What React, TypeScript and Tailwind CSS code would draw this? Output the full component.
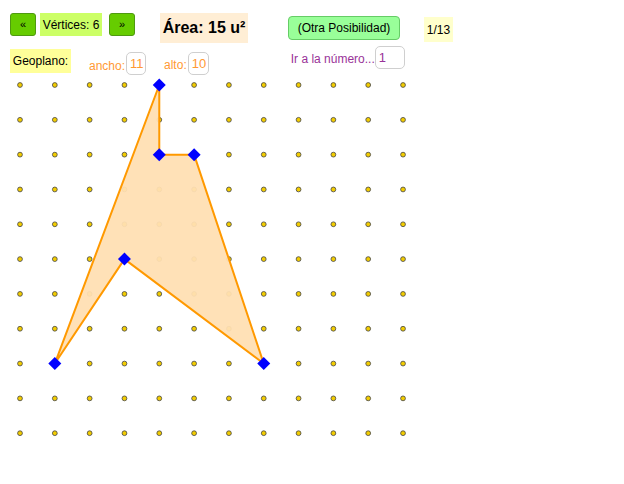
import React from "react";

const X0 = 20;
const Y0 = 85;
const STEP = 34.82;
const TOP = 78;

const px = (c: number) => X0 + c * STEP;
const py = (r: number) => Y0 + r * STEP - TOP;

const verts: [number, number][] = [
  [4, 0],
  [4, 2],
  [5, 2],
  [7, 8],
  [3, 5],
  [1, 8],
];

const Geoboard: React.FC = () => {
  const dots = [];
  for (let r = 0; r < 11; r++) {
    for (let c = 0; c < 12; c++) {
      dots.push(
        <circle
          key={`${r}-${c}`}
          cx={px(c)}
          cy={py(r)}
          r={2.4}
          fill="#f2cc00"
          stroke="#444"
          strokeWidth={0.8}
        />
      );
    }
  }
  const pts = verts.map(([c, r]) => `${px(c)},${py(r)}`).join(" ");
  return (
    <svg width={624} height={406} className="block">
      {dots}
      <polygon
        points={pts}
        fill="#ffdfb3"
        fillOpacity={0.95}
        stroke="#ff9900"
        strokeWidth={2}
        strokeLinejoin="round"
      />
      {verts.map(([c, r], i) => {
        const x = px(c);
        const y = py(r);
        const d = 6.5;
        return (
          <polygon
            key={i}
            points={`${x},${y - d} ${x + d},${y} ${x},${y + d} ${x - d},${y}`}
            fill="#0000ff"
          />
        );
      })}
    </svg>
  );
};

const GreenBtn: React.FC<{ label: string; className?: string }> = ({ label, className }) => (
  <div
    className={`w-[26px] h-[23px] rounded-[3px] bg-[#66cc00] border border-[#4f9a10] flex items-center justify-center text-[11px] text-black ${className ?? ""}`}
  >
    {label}
  </div>
);

const SmallInput: React.FC<{ value: string; color: string; className?: string }> = ({ value, color, className }) => (
  <div
    className={`h-[23px] rounded-[5px] border border-[#cfcfcf] bg-white flex items-center px-[3px] text-[13px] ${color} ${className ?? ""}`}
  >
    {value}
  </div>
);

export default function App() {
  return (
    <div className="w-[624px] h-[484px] bg-white overflow-hidden font-['Liberation_Sans',Arial,sans-serif] text-black">
      <div className="h-[78px] relative">
        <div className="flex items-start pt-[12px]">
          <GreenBtn label="«" className="ml-[10px] mt-[1px]" />
          <div className="ml-[4px] mt-[1px] h-[23px] w-[62px] bg-[#ccff66] flex items-center justify-center text-[12px]">
            Vértices: 6
          </div>
          <GreenBtn label="»" className="ml-[7px] mt-[1px]" />
          <div className="ml-[25px] mt-[1px] h-[30px] w-[88px] bg-[#ffeed5] flex items-center justify-center text-[16px] font-bold">
            Área: 15 u²
          </div>
          <div className="ml-[40px] mt-[4px] h-[24px] w-[112px] rounded-[4px] bg-[#99ff99] border border-[#66cc66] flex items-center justify-center text-[12px]">
            (Otra Posibilidad)
          </div>
          <div className="ml-[24px] mt-[5px] h-[25px] w-[29px] bg-[#ffffcc] flex items-center justify-center text-[12px]">
            1/13
          </div>
        </div>
        <div className="flex items-start mt-[1px]">
          <div className="ml-[10px] mt-[5px] h-[24px] w-[61px] bg-[#ffff99] flex items-center justify-center text-[12px]">
            Geoplano:
          </div>
          <div className="ml-[18px] mt-[8px] flex items-center">
            <span className="text-[12px] text-[#ff9933] mt-[4px]">ancho:</span>
            <SmallInput value="11" color="text-[#ff9933]" className="ml-[1px] w-[20px]" />
          </div>
          <div className="ml-[18px] mt-[8px] flex items-center">
            <span className="text-[12px] text-[#ff9933] mt-[2px]">alto:</span>
            <SmallInput value="10" color="text-[#ff9933]" className="ml-[1px] w-[21px]" />
          </div>
          <div className="ml-[82px] mt-[2px] flex items-center">
            <span className="text-[12px] text-[#993399] mt-[3px]">Ir a la número...</span>
            <SmallInput value="1" color="text-[#993399]" className="ml-[0px] w-[30px]" />
          </div>
        </div>
      </div>
      <Geoboard />
    </div>
  );
}
